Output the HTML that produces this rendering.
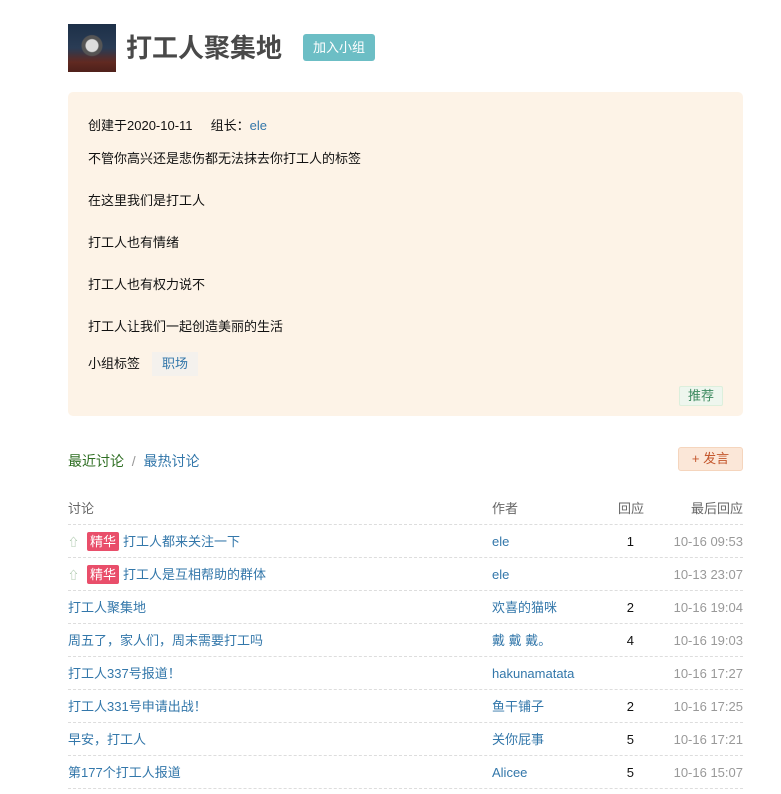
<!DOCTYPE html>
<html><head><meta charset="utf-8"><style>
*{margin:0;padding:0;box-sizing:border-box}
body{width:781px;height:794px;background:#fff;font-family:"Liberation Sans","Noto Sans CJK SC",sans-serif;font-size:13px;color:#111;position:relative;overflow:hidden}
a{color:#3377aa;text-decoration:none}
.abs{position:absolute}
.avatar{left:68px;top:24px;width:48px;height:48px;background:radial-gradient(circle at 50% 45%,#ddd 0 6px,#555 7px 10px,transparent 11px),linear-gradient(180deg,#1d3048 0%,#2a3c55 50%,#5a2a22 80%,#2a1a18 100%)}
h1{left:126px;top:30px;font-size:26px;font-weight:bold;color:#494949;line-height:36px}
.join{left:303px;top:34px;width:72px;height:27px;background:#6cbec5;color:#fff;border-radius:3px;font-size:13px;text-align:center;line-height:27px}
.box{left:68px;top:92px;width:675px;height:324px;background:#fdf3e7;border-radius:5px}
.box p{position:absolute;left:20px;line-height:16px}
.tag{position:absolute;width:46px;height:24px;background:#f4f1ed;color:#3377aa;text-align:center;line-height:24px}
.rec{position:absolute;left:611px;top:294px;width:44px;height:20px;background:#eef6ee;border:1px solid #dcefdc;color:#3c8a5f;border-radius:2px;text-align:center;line-height:18px}
.nav{left:68px;top:451px;font-size:14px;color:#999}
.post{left:678px;top:447px;width:65px;height:24px;background:#fbe7d8;border:1px solid #f5d5bd;color:#c4572d;border-radius:3px;text-align:center;line-height:22px}
.row{position:absolute;left:68px;width:675px;height:33px;border-bottom:1px dashed #ddd;line-height:33px}
.row>span{position:absolute;top:0}
.c1{left:0}.c2{left:424px}.c3{right:109px}.c4{right:0;color:#999}
.hd{color:#666}
.jh{display:inline-block;background:#e94e6a;color:#fff;padding:0 3px;line-height:19px;border-radius:2px;margin:0 4px 0 8px}
.up{color:#9bbd9b;font-size:11px}
</style></head><body>
<div class="abs avatar"></div>
<div class="abs" style="left:68px;top:24px;width:48px;height:48px;background:linear-gradient(180deg,rgba(0,0,0,0) 0,rgba(0,0,0,0) 60%,rgba(120,40,30,.5) 100%)"></div>
<h1 class="abs">打工人聚集地</h1>
<div class="abs join">加入小组</div>
<div class="abs box">
<p style="top:26px">创建于2020-10-11 &nbsp; &nbsp; 组长：<a>ele</a></p>
<p style="top:59px">不管你高兴还是悲伤都无法抹去你打工人的标签</p>
<p style="top:101px">在这里我们是打工人</p>
<p style="top:143px">打工人也有情绪</p>
<p style="top:185px">打工人也有权力说不</p>
<p style="top:227px">打工人让我们一起创造美丽的生活</p>
<p style="top:264px">小组标签</p>
<div class="tag" style="left:84px;top:260px">职场</div>
<div class="rec">推荐</div>
</div>
<div class="abs nav"><span style="color:#2e6e22">最近讨论</span> &nbsp;/&nbsp; <a>最热讨论</a></div>
<div class="abs post">+ 发言</div>
<div class="row hd" style="top:492px"><span class="c1">讨论</span><span class="c2">作者</span><span class="c3" style="right:99px">回应</span><span class="c4" style="color:#666">最后回应</span></div>
<div class="row" style="top:525px"><span class="c1"><span class="up">⇧</span><span class="jh">精华</span><a>打工人都来关注一下</a></span><span class="c2"><a>ele</a></span><span class="c3">1</span><span class="c4">10-16 09:53</span></div>
<div class="row" style="top:558px"><span class="c1"><span class="up">⇧</span><span class="jh">精华</span><a>打工人是互相帮助的群体</a></span><span class="c2"><a>ele</a></span><span class="c3"></span><span class="c4">10-13 23:07</span></div>
<div class="row" style="top:591px"><span class="c1"><a>打工人聚集地</a></span><span class="c2"><a>欢喜的猫咪</a></span><span class="c3">2</span><span class="c4">10-16 19:04</span></div>
<div class="row" style="top:624px"><span class="c1"><a>周五了，家人们，周末需要打工吗</a></span><span class="c2"><a>戴 戴 戴。</a></span><span class="c3">4</span><span class="c4">10-16 19:03</span></div>
<div class="row" style="top:657px"><span class="c1"><a>打工人337号报道！</a></span><span class="c2"><a>hakunamatata</a></span><span class="c3"></span><span class="c4">10-16 17:27</span></div>
<div class="row" style="top:690px"><span class="c1"><a>打工人331号申请出战！</a></span><span class="c2"><a>鱼干铺子</a></span><span class="c3">2</span><span class="c4">10-16 17:25</span></div>
<div class="row" style="top:723px"><span class="c1"><a>早安，打工人</a></span><span class="c2"><a>关你屁事</a></span><span class="c3">5</span><span class="c4">10-16 17:21</span></div>
<div class="row" style="top:756px"><span class="c1"><a>第177个打工人报道</a></span><span class="c2"><a>Alicee</a></span><span class="c3">5</span><span class="c4">10-16 15:07</span></div>
</body></html>
